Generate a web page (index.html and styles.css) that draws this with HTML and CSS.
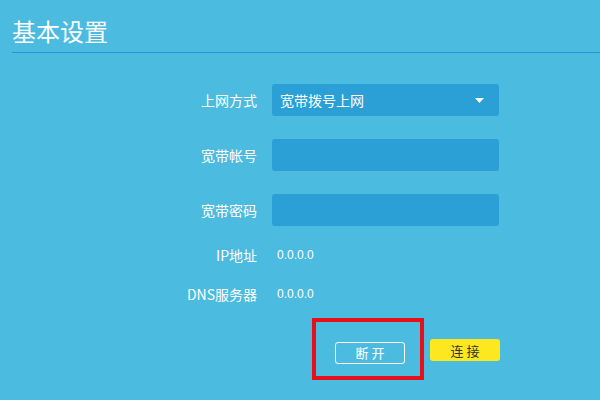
FILE: index.html
```html
<!DOCTYPE html>
<html lang="zh-CN">
<head>
    <meta charset="UTF-8">
    <title>基本设置</title>
    <link rel="stylesheet" href="styles.css">
</head>
<body>
<div class="header">
    <h1>基本设置</h1>
</div>

<div class="form">
    <div class="row">
        <label>上网方式</label>
        <div class="select">
            <span>宽带拨号上网</span>
            <svg class="arrow" width="9" height="5" viewBox="0 0 9 5"><polygon points="0,0 9,0 4.5,5" fill="#fff"/></svg>
        </div>
    </div>
    <div class="row">
        <label>宽带帐号</label>
        <input type="text" class="field">
    </div>
    <div class="row last-field">
        <label>宽带密码</label>
        <input type="password" class="field">
    </div>
    <div class="row info">
        <label>IP地址</label>
        <span class="value">0.0.0.0</span>
    </div>
    <div class="row info">
        <label>DNS服务器</label>
        <span class="value">0.0.0.0</span>
    </div>

    <div class="actions">
        <div class="highlight">
            <button class="btn btn-off">断 开</button>
        </div>
        <button class="btn btn-on">连 接</button>
    </div>
</div>
</body>
</html>
```

FILE: styles.css
```css
body {
    margin: 0;
    padding: 0;
    background: #4bbbe0;
    font-family: "Noto Sans CJK SC", "Liberation Sans", sans-serif;
    color: #fff;
    width: 600px;
    height: 400px;
    overflow: hidden;
}

.header {
    margin-left: 12px;
    padding-top: 14px;
    border-bottom: 1px solid #2a8fd3;
}

.header h1 {
    margin: 0;
    font-size: 24px;
    font-weight: normal;
    line-height: 34px;
    height: 38px;
}

.form {
    padding-top: 31px;
}

.row {
    display: grid;
    grid-template-columns: 257px 227px;
    column-gap: 15px;
    align-items: center;
    height: 32px;
    margin-bottom: 23px;
}

.row.last-field {
    margin-bottom: 19px;
}

.row label {
    text-align: right;
    font-size: 14px;
}

.select,
.field {
    box-sizing: border-box;
    height: 32px;
    width: 227px;
    background: #2aa0d7;
    border: none;
    border-radius: 3px;
}

.select {
    display: flex;
    align-items: center;
    justify-content: space-between;
    padding: 0 15px 0 8px;
    font-size: 14px;
}

.field {
    padding: 0 8px;
    color: #fff;
    font-family: inherit;
    font-size: 14px;
    outline: none;
}

.row.info {
    height: 20px;
    margin-bottom: 19px;
}

.value {
    font-family: "Liberation Sans", sans-serif;
    font-size: 12px;
    padding-left: 5px;
}

.actions {
    display: flex;
    align-items: flex-start;
    gap: 6px;
    margin-left: 312px;
    margin-top: -5px;
}

.highlight {
    border: 4px solid #e60f1a;
    padding: 17px 15px 12px 19px;
}

.btn {
    box-sizing: border-box;
    width: 70px;
    height: 22px;
    border-radius: 3px;
    font-family: inherit;
    font-size: 13px;
    padding: 0;
    cursor: pointer;
}

.btn-off {
    background: transparent;
    border: 1px solid #fff;
    color: #fff;
}

.btn-on {
    margin-top: 21px;
    background: #fde81f;
    border: none;
    color: #333;
}
```
